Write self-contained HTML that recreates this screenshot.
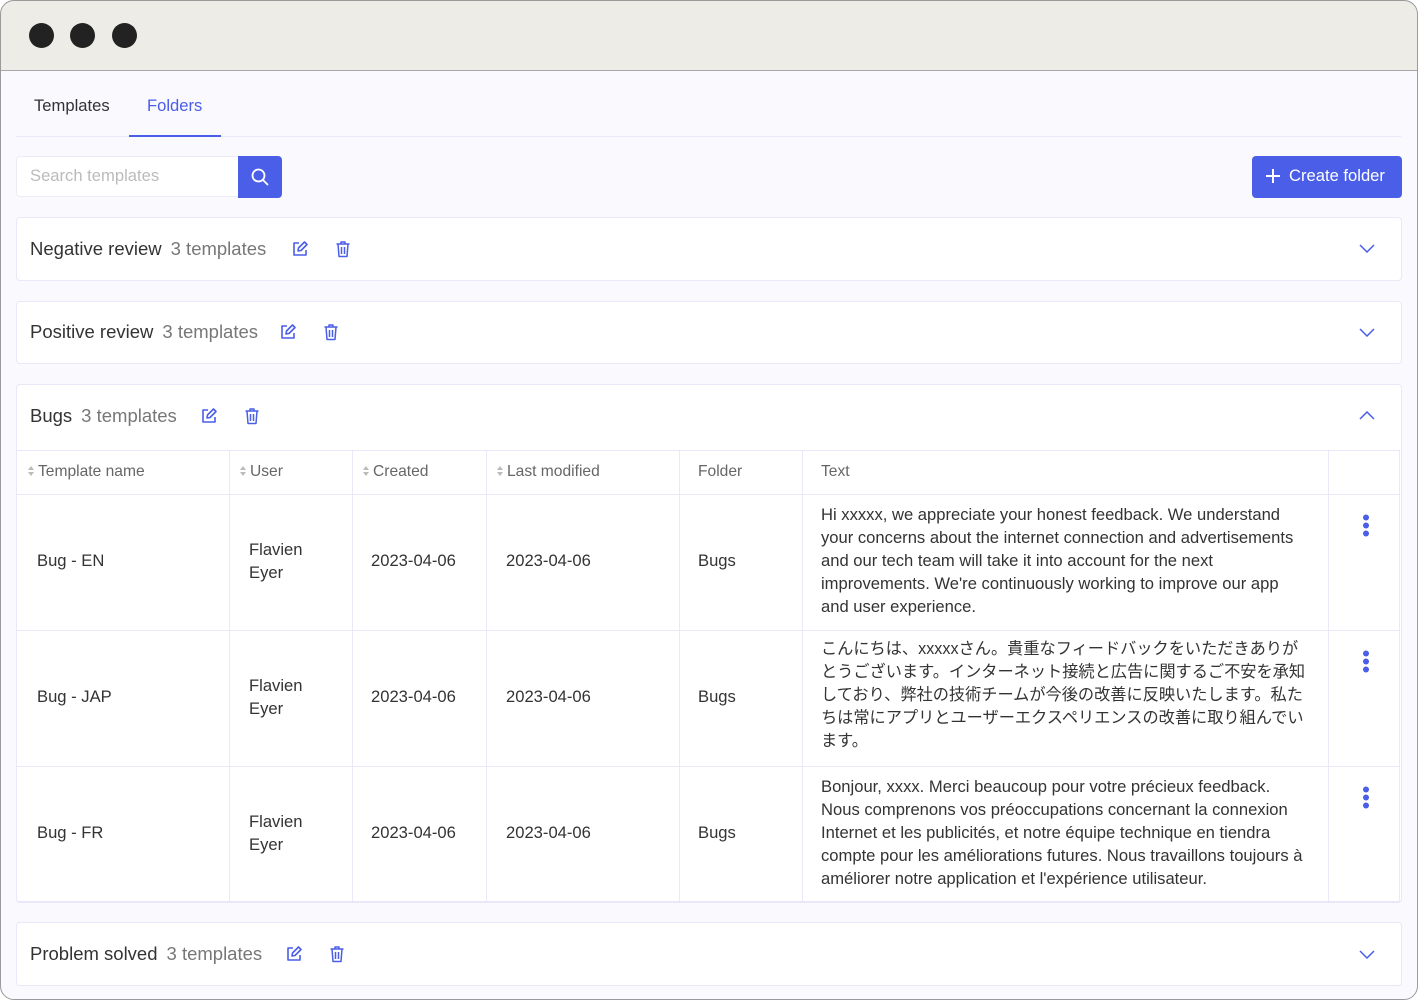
<!DOCTYPE html>
<html><head><meta charset="utf-8"><style>
*{box-sizing:border-box;margin:0;padding:0}
body{width:1418px;height:1000px;background:#fff;font-family:"Liberation Sans","Noto Sans CJK JP",sans-serif;color:#333;position:relative;overflow:hidden}
.win{position:absolute;left:0;top:0;width:1418px;height:1000px;border-radius:14px;background:#f9f9fe;overflow:hidden}
.frame{position:absolute;left:0;top:0;width:1418px;height:1000px;border:1px solid #9a9a9a;border-radius:14px;z-index:10}
.bar{position:absolute;left:0;top:0;right:0;height:71px;background:#edece6;border-bottom:1px solid #a8a8a8}
.dot{position:absolute;top:23px;width:25px;height:25px;border-radius:50%;background:#222;}
.a{position:absolute;white-space:nowrap}
.card{position:absolute;left:16px;width:1386px;background:#fff;border:1px solid #e8e8f8;border-radius:4px}
.ttl{position:absolute;left:13px;font-size:18.5px;color:#333}
.ttl span{color:#777;margin-left:9px}
.chev{position:absolute;right:26px}
.cell{position:absolute;font-size:16.6px;color:#333;line-height:23px;white-space:nowrap}
.hd{position:absolute;font-size:15.6px;color:#666;white-space:nowrap}
.vl{position:absolute;width:1px;background:#e8e8f8}
.hl{position:absolute;height:1px;background:#e8e8f8}
.srt{display:inline-block;width:8px;height:12px;vertical-align:-1px;margin-right:3px}
</style></head><body>
<div class="win">
<div class="bar"><div class="dot" style="left:29px"></div><div class="dot" style="left:70px"></div><div class="dot" style="left:112px"></div></div>

<div class="a" style="left:34px;top:96px;font-size:16.6px;color:#333">Templates</div>
<div class="a" style="left:147px;top:96px;font-size:16.6px;color:#4a5ee8">Folders</div>
<div class="hl" style="left:16px;top:136px;width:1385px"></div>
<div class="a" style="left:129px;top:135px;width:92px;height:2px;background:#4a5ee8"></div>

<div class="a" style="left:16px;top:156px;width:223px;height:41px;background:#fff;border:1px solid #ececf8;border-radius:4px 0 0 4px"></div>
<div class="a" style="left:30px;top:166px;font-size:16.6px;color:#bbb">Search templates</div>
<div class="a" style="left:238px;top:156px;width:44px;height:42px;background:#4a5ee8;border-radius:0 4px 4px 0">
<svg width="44" height="42" viewBox="0 0 44 42"><circle cx="20.5" cy="19.5" r="6" fill="none" stroke="#fff" stroke-width="1.8"/><path d="M25 24l4.5 4.5" stroke="#fff" stroke-width="1.8" stroke-linecap="round"/></svg></div>

<div class="a" style="left:1252px;top:156px;width:150px;height:42px;background:#4a5ee8;border-radius:4px;color:#fff;font-size:16.6px;line-height:40px;padding-left:37px">Create folder</div>
<svg class="a" style="left:1264px;top:167px" width="18" height="18"><path d="M9 2v14M2 9h14" stroke="#fff" stroke-width="2"/></svg>

<div class="card" style="top:217px;height:64px"><div class="ttl" style="top:20px">Negative review<span>3 templates</span></div>
<svg class="a" style="left:274px;top:22px" width="18" height="18" viewBox="0 0 18 18"><path d="M8 3H3v12h12v-5" fill="none" stroke="#4a5ee8" stroke-width="1.6" stroke-linejoin="round"/><path d="M7 11l.5-3 6-6 2.5 2.5-6 6z" fill="none" stroke="#4a5ee8" stroke-width="1.6" stroke-linejoin="round"/></svg>
<svg class="a" style="left:318px;top:22px" width="16" height="18" viewBox="0 0 16 18"><path d="M1.5 4h13M6 4V2h4v2M3 4l1 12.5h8L13 4M6.5 7v7M9.5 7v7" fill="none" stroke="#4a5ee8" stroke-width="1.5" stroke-linejoin="round"/></svg>
<svg class="chev" style="top:25px" width="16" height="10"><path d="M1 2l7 7 7-7" fill="none" stroke="#4a5ee8" stroke-width="1.5"/></svg></div>

<div class="card" style="top:301px;height:63px"><div class="ttl" style="top:19px">Positive review<span>3 templates</span></div>
<svg class="a" style="left:262px;top:21px" width="18" height="18" viewBox="0 0 18 18"><path d="M8 3H3v12h12v-5" fill="none" stroke="#4a5ee8" stroke-width="1.6" stroke-linejoin="round"/><path d="M7 11l.5-3 6-6 2.5 2.5-6 6z" fill="none" stroke="#4a5ee8" stroke-width="1.6" stroke-linejoin="round"/></svg>
<svg class="a" style="left:306px;top:21px" width="16" height="18" viewBox="0 0 16 18"><path d="M1.5 4h13M6 4V2h4v2M3 4l1 12.5h8L13 4M6.5 7v7M9.5 7v7" fill="none" stroke="#4a5ee8" stroke-width="1.5" stroke-linejoin="round"/></svg>
<svg class="chev" style="top:25px" width="16" height="10"><path d="M1 2l7 7 7-7" fill="none" stroke="#4a5ee8" stroke-width="1.5"/></svg></div>

<div class="card" style="top:384px;height:519px"><div class="ttl" style="top:20px">Bugs<span>3 templates</span></div>
<svg class="a" style="left:183px;top:22px" width="18" height="18" viewBox="0 0 18 18"><path d="M8 3H3v12h12v-5" fill="none" stroke="#4a5ee8" stroke-width="1.6" stroke-linejoin="round"/><path d="M7 11l.5-3 6-6 2.5 2.5-6 6z" fill="none" stroke="#4a5ee8" stroke-width="1.6" stroke-linejoin="round"/></svg>
<svg class="a" style="left:227px;top:22px" width="16" height="18" viewBox="0 0 16 18"><path d="M1.5 4h13M6 4V2h4v2M3 4l1 12.5h8L13 4M6.5 7v7M9.5 7v7" fill="none" stroke="#4a5ee8" stroke-width="1.5" stroke-linejoin="round"/></svg>
<svg class="chev" style="top:26px" width="16" height="10"><path d="M1 8l7-7 7 7" fill="none" stroke="#4a5ee8" stroke-width="1.5"/></svg></div>

<div class="hl" style="left:17px;top:450px;width:1383px"></div>
<div class="hl" style="left:17px;top:494px;width:1383px"></div>
<div class="hl" style="left:17px;top:630px;width:1383px"></div>
<div class="hl" style="left:17px;top:766px;width:1383px"></div>
<div class="hl" style="left:17px;top:901px;width:1383px"></div>
<div class="vl" style="left:229px;top:451px;height:450px"></div>
<div class="vl" style="left:352px;top:451px;height:450px"></div>
<div class="vl" style="left:486px;top:451px;height:450px"></div>
<div class="vl" style="left:679px;top:451px;height:450px"></div>
<div class="vl" style="left:802px;top:451px;height:450px"></div>
<div class="vl" style="left:1328px;top:451px;height:450px"></div>
<div class="vl" style="left:1399px;top:451px;height:450px"></div>

<div class="hd" style="left:27px;top:463px"><svg class="srt" viewBox="0 0 8 12"><path d="M4 1l3 4H1zM4 11L1 7h6z" fill="#bbb"/></svg>Template name</div>
<div class="hd" style="left:239px;top:463px"><svg class="srt" viewBox="0 0 8 12"><path d="M4 1l3 4H1zM4 11L1 7h6z" fill="#bbb"/></svg>User</div>
<div class="hd" style="left:362px;top:463px"><svg class="srt" viewBox="0 0 8 12"><path d="M4 1l3 4H1zM4 11L1 7h6z" fill="#bbb"/></svg>Created</div>
<div class="hd" style="left:496px;top:463px"><svg class="srt" viewBox="0 0 8 12"><path d="M4 1l3 4H1zM4 11L1 7h6z" fill="#bbb"/></svg>Last modified</div>
<div class="hd" style="left:698px;top:463px">Folder</div>
<div class="hd" style="left:821px;top:463px">Text</div>

<div class="cell" style="left:37px;top:549px">Bug - EN</div>
<div class="cell" style="left:249px;top:538px">Flavien<br>Eyer</div>
<div class="cell" style="left:371px;top:549px">2023-04-06</div>
<div class="cell" style="left:506px;top:549px">2023-04-06</div>
<div class="cell" style="left:698px;top:549px">Bugs</div>
<div class="cell" style="left:821px;top:503px">Hi xxxxx, we appreciate your honest feedback. We understand<br>your concerns about the internet connection and advertisements<br>and our tech team will take it into account for the next<br>improvements. We're continuously working to improve our app<br>and user experience.</div>
<div class="cell" style="left:37px;top:685px">Bug - JAP</div>
<div class="cell" style="left:249px;top:674px">Flavien<br>Eyer</div>
<div class="cell" style="left:371px;top:685px">2023-04-06</div>
<div class="cell" style="left:506px;top:685px">2023-04-06</div>
<div class="cell" style="left:698px;top:685px">Bugs</div>
<div class="cell" style="left:821px;top:638px;font-size:16.2px">こんにちは、xxxxxさん。貴重なフィードバックをいただきありが<br>とうございます。インターネット接続と広告に関するご不安を承知<br>しており、弊社の技術チームが今後の改善に反映いたします。私た<br>ちは常にアプリとユーザーエクスペリエンスの改善に取り組んでい<br>ます。</div>
<div class="cell" style="left:37px;top:821px">Bug - FR</div>
<div class="cell" style="left:249px;top:810px">Flavien<br>Eyer</div>
<div class="cell" style="left:371px;top:821px">2023-04-06</div>
<div class="cell" style="left:506px;top:821px">2023-04-06</div>
<div class="cell" style="left:698px;top:821px">Bugs</div>
<div class="cell" style="left:821px;top:775px">Bonjour, xxxx. Merci beaucoup pour votre précieux feedback.<br>Nous comprenons vos préoccupations concernant la connexion<br>Internet et les publicités, et notre équipe technique en tiendra<br>compte pour les améliorations futures. Nous travaillons toujours à<br>améliorer notre application et l'expérience utilisateur.</div>

<svg class="a" style="left:1362px;top:514px" width="8" height="24"><circle cx="4" cy="3.5" r="3" fill="#4a5ee8"/><circle cx="4" cy="11.5" r="3" fill="#4a5ee8"/><circle cx="4" cy="19.5" r="3" fill="#4a5ee8"/></svg>
<svg class="a" style="left:1362px;top:650px" width="8" height="24"><circle cx="4" cy="3.5" r="3" fill="#4a5ee8"/><circle cx="4" cy="11.5" r="3" fill="#4a5ee8"/><circle cx="4" cy="19.5" r="3" fill="#4a5ee8"/></svg>
<svg class="a" style="left:1362px;top:786px" width="8" height="24"><circle cx="4" cy="3.5" r="3" fill="#4a5ee8"/><circle cx="4" cy="11.5" r="3" fill="#4a5ee8"/><circle cx="4" cy="19.5" r="3" fill="#4a5ee8"/></svg>

<div class="card" style="top:922px;height:64px"><div class="ttl" style="top:20px">Problem solved<span>3 templates</span></div>
<svg class="a" style="left:268px;top:22px" width="18" height="18" viewBox="0 0 18 18"><path d="M8 3H3v12h12v-5" fill="none" stroke="#4a5ee8" stroke-width="1.6" stroke-linejoin="round"/><path d="M7 11l.5-3 6-6 2.5 2.5-6 6z" fill="none" stroke="#4a5ee8" stroke-width="1.6" stroke-linejoin="round"/></svg>
<svg class="a" style="left:312px;top:22px" width="16" height="18" viewBox="0 0 16 18"><path d="M1.5 4h13M6 4V2h4v2M3 4l1 12.5h8L13 4M6.5 7v7M9.5 7v7" fill="none" stroke="#4a5ee8" stroke-width="1.5" stroke-linejoin="round"/></svg>
<svg class="chev" style="top:26px" width="16" height="10"><path d="M1 2l7 7 7-7" fill="none" stroke="#4a5ee8" stroke-width="1.5"/></svg></div>
</div>
<div class="frame"></div>
</body></html>
